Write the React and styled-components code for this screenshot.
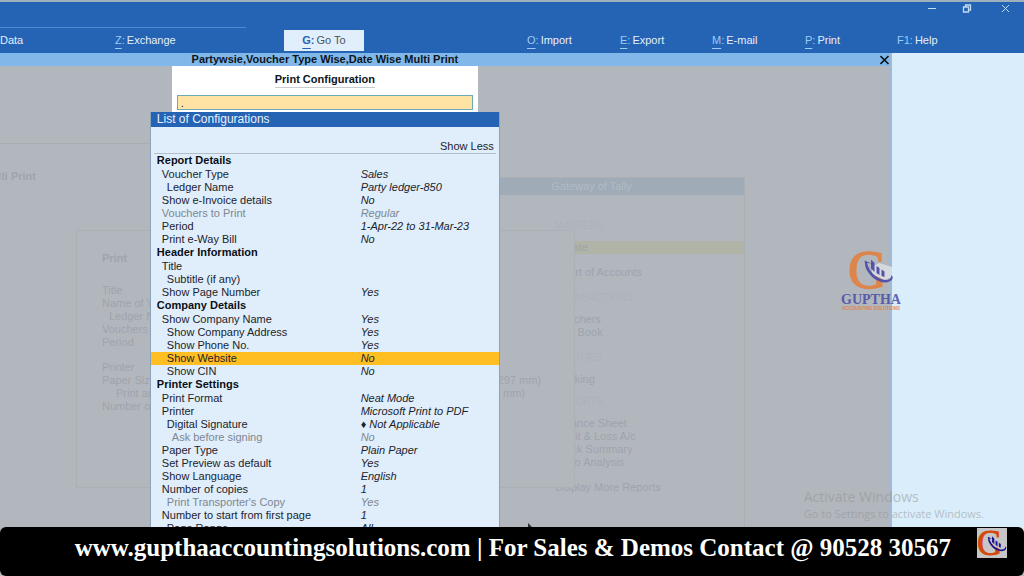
import React, {useState} from 'react';
import styled, {createGlobalStyle} from 'styled-components';

const GlobalStyle = createGlobalStyle`
    * {
        box-sizing: border-box;
    }

    body {
        margin: 0;
        font-family: "Liberation Sans", Arial, sans-serif;
        font-size: 11px;
        line-height: 13px;
        color: #1c232b;
    }

    button, input {
        font: inherit;
        color: inherit;
    }
`

const Screen = styled.div`
    display: flex;
    flex-direction: column;
    height: 100vh;
    overflow: hidden;
    background: #b2b7be;
`

const Header = styled.header`
    background: #2563b4;
    border-top: 2px solid #9fb0bd;
`

const WindowBar = styled.div`
    display: flex;
    justify-content: flex-end;
    gap: 20px;
    height: 25px;
    padding-right: 10px;
`

const WindowButton = styled.button`
    width: 16px;
    height: 13px;
    padding: 0;
    border: none;
    background: none;
    color: #c3dcf5;
`

const HeaderLine = styled.div`
    width: 24%;
    height: 1px;
    background: #4f8bd0;
`

const Menu = styled.nav`
    display: grid;
    grid-template-columns: 115fr 169fr 243fr 93fr 92fr 93fr 92fr 127fr;
    align-items: center;
    height: 25px;
`

const MenuButton = styled.button`
    justify-self: start;
    padding: 0;
    border: none;
    background: none;
    color: #e4effa;
    white-space: nowrap;
`

const GoToButton = styled(MenuButton)`
    width: 80px;
    height: 21px;
    background: #e0effb;
    color: #4b545e;
`

const Key = styled.span`
    color: ${({$strong}) => $strong ? '#2563b4' : '#9ccbf5'};
    font-weight: ${({$strong}) => $strong ? 'bold' : 'normal'};
    text-decoration: ${({$plain}) => $plain ? 'none' : 'underline'};
    text-underline-offset: 4px;
`

const Colon = styled(Key)`
    margin-right: 2px;
    text-decoration: none;
`

const Workspace = styled.div`
    display: flex;
    flex: 1;
    min-height: 0;
`

const Main = styled.main`
    display: flex;
    flex-direction: column;
    flex: 1;
    min-width: 0;
`

const SidePane = styled.aside`
    width: 134px;
    background: #d9edfa;
    border-left: 2px solid #9fb9d6;
`

const TitleBar = styled.div`
    display: flex;
    justify-content: space-between;
    height: 13px;
    background: #80b8e9;
    color: #0d141c;
`

const Title = styled.h1`
    width: 73%;
    margin: 0;
    font-size: 11px;
    text-align: center;
`

const CloseButton = styled.button`
    width: 10px;
    height: 13px;
    padding: 0;
    border: none;
    background: none;
`

/* backdrop and dialogs share one grid cell */
const Stack = styled.div`
    display: grid;
    grid-template: minmax(0, 1fr) / minmax(0, 1fr);
    flex: 1;
    min-height: 0;
    overflow: hidden;
`

const Backdrop = styled.div`
    position: relative;
    grid-area: 1 / 1;
    color: #9fa4ab;
`

const FadedWindow = styled.section`
    position: absolute;
    left: ${({$x}) => $x}px;
    top: ${({$y}) => $y}px;
    width: ${({$w}) => $w}px;
    height: ${({$h}) => $h}px;
    background: #b2b7be;
    border: 1px solid #abb0b5;
    white-space: nowrap;
    overflow: hidden;
`

const FadedReport = styled(FadedWindow)`
    display: flex;
    flex-direction: column;
    justify-content: flex-end;
    align-items: flex-end;
    padding: 0 115px 6px 0;
    border-width: 0;
    font-weight: bold;

    &::before {
        content: "";
        width: 300px;
        height: 1px;
        margin: 0 -115px 26px 0;
        background: #a9aeb3;
    }
`

const FadedTitle = styled.h2`
    margin: 0;
    padding: 2px 0;
    background: #a0abb8;
    color: #b0bac6;
    font-size: 11px;
    font-weight: normal;
    text-align: center;
`

const FadedMenu = styled.ul`
    margin: 0;
    padding: 12px 0 0;
    list-style: none;
`

const FadedItem = styled.li`
    margin-top: ${({$gap}) => $gap || 0}px;
    padding-left: 116px;
    background: ${({$active}) => $active ? '#b0b4a6' : 'none'};
    color: ${({$caption}) => $caption ? '#adb2ba' : 'inherit'};
    font-size: ${({$caption}) => $caption ? 10 : 11}px;
`

const FadedForm = styled.div`
    padding: 21px 33px 0 25px;
`

const FadedHeading = styled.h2`
    margin: 0 0 19px;
    font-size: 11px;
`

const FadedRow = styled.div`
    display: flex;
    justify-content: space-between;
    margin-top: ${({$gap}) => $gap || 0}px;
    padding-left: ${({$level}) => ($level || 0) * 7}px;
    padding-right: ${({$inset}) => $inset || 0}px;
`

const Cursor = styled.svg`
    position: absolute;
    left: 527px;
    top: 457px;
`

const Dialogs = styled.div`
    display: flex;
    flex-direction: column;
    align-items: center;
    grid-area: 1 / 1;
    width: 73%;
    z-index: 1;
`

const SearchPanel = styled.div`
    width: 306px;
    height: 46px;
    padding: 7px 5px 0;
    background: #fff;
    text-align: center;
    flex-shrink: 0;
`

const SearchLabel = styled.label`
    display: inline-block;
    height: 15px;
    border-bottom: 1px solid #c9cdd2;
    color: #0d141c;
    font-weight: bold;
`

const SearchInput = styled.input`
    display: block;
    width: 100%;
    height: 15px;
    margin-top: 7px;
    padding: 0 3px;
    border: 1px solid #6aabb8;
    background: #fee3a4;
    outline: none;
`

const ListPanel = styled.section`
    flex: 1;
    width: 350px;
    min-height: 0;
    overflow: hidden;
    background: #e0eefb;
    border: solid #8aa3bd;
    border-width: 0 1px;
`

const ListTitle = styled.h2`
    margin: 0;
    padding: 0 6px;
    background: #2563b4;
    color: #e8f2fc;
    font-size: 12px;
    font-weight: normal;
    line-height: 15px;
`

const ListTools = styled.div`
    display: flex;
    justify-content: flex-end;
    margin: 0 3px;
    padding: 13px 2px 0 0;
    height: 27px;
    border-bottom: 1px solid #b3bdc9;
`

const ToolButton = styled.button`
    height: 13px;
    padding: 0;
    border: none;
    background: none;
`

const Settings = styled.table`
    width: 100%;
    table-layout: fixed;
    border-collapse: collapse;
    white-space: nowrap;
`

const NameColumn = styled.col`
    width: 60%;
`

const Group = styled.th`
    height: 14px;
    padding: 0 0 0 6px;
    color: #0a0f16;
    line-height: 13px;
    vertical-align: top;
    text-align: left;
`

const Row = styled.tr`
    background: ${({$active}) => $active ? '#ffbe22' : 'none'};
    color: ${({$muted}) => $muted ? '#7d8791' : 'inherit'};
`

const Name = styled.th`
    height: 13px;
    padding: 0 0 0 ${({$level}) => 6 + $level * 5}px;
    font-weight: normal;
    text-align: left;
`

const Value = styled.td`
    padding: 0 1px;
    font-style: italic;
`

const Banner = styled.footer`
    position: relative;
    display: flex;
    justify-content: flex-end;
    gap: 26px;
    height: 49px;
    margin: -6px 0 0;
    padding: 1px 17px 0 0;
    border-radius: 6px;
    background: #000;
    color: #fff;
    z-index: 2;
    flex-shrink: 0;
`

const BannerText = styled.p`
    margin: 0;
    font-family: "Liberation Serif", "Times New Roman", serif;
    font-size: 25px;
    font-weight: bold;
    line-height: 40px;
    white-space: nowrap;
`

const BannerLogo = styled.svg`
    background: #c6c6c6;
`

const Brand = styled.svg`
    position: absolute;
    right: 120px;
    top: 246px;
    opacity: 0.8;
    z-index: 3;
`

const Watermark = styled.div`
    position: absolute;
    right: 40px;
    top: 488px;
    color: rgba(140, 143, 140, 0.5);
    font-family: "Open Sans", sans-serif;
    font-size: 11px;
    line-height: 17px;
    z-index: 3;
`

const WatermarkTitle = styled.div`
    font-size: 14px;
`

const menuItems = [
    {key: 'O', text: 'Import'},
    {key: 'E', text: 'Export'},
    {key: 'M', text: 'E-mail'},
    {key: 'P', text: 'Print'},
    {key: 'F1', text: 'Help', plain: true},
];

const settings = [
    {group: 'Report Details'},
    {name: 'Voucher Type', value: 'Sales', level: 1},
    {name: 'Ledger Name', value: 'Party ledger-850', level: 2},
    {name: 'Show e-Invoice details', value: 'No', level: 1},
    {name: 'Vouchers to Print', value: 'Regular', level: 1, muted: true},
    {name: 'Period', value: '1-Apr-22 to 31-Mar-23', level: 1},
    {name: 'Print e-Way Bill', value: 'No', level: 1},
    {group: 'Header Information'},
    {name: 'Title', value: '', level: 1},
    {name: 'Subtitle (if any)', value: '', level: 2},
    {name: 'Show Page Number', value: 'Yes', level: 1},
    {group: 'Company Details'},
    {name: 'Show Company Name', value: 'Yes', level: 1},
    {name: 'Show Company Address', value: 'Yes', level: 2},
    {name: 'Show Phone No.', value: 'Yes', level: 2},
    {name: 'Show Website', value: 'No', level: 2},
    {name: 'Show CIN', value: 'No', level: 2},
    {group: 'Printer Settings'},
    {name: 'Print Format', value: 'Neat Mode', level: 1},
    {name: 'Printer', value: 'Microsoft Print to PDF', level: 1},
    {name: 'Digital Signature', value: '♦ Not Applicable', level: 2},
    {name: 'Ask before signing', value: 'No', level: 3, muted: true},
    {name: 'Paper Type', value: 'Plain Paper', level: 1},
    {name: 'Set Preview as default', value: 'Yes', level: 1},
    {name: 'Show Language', value: 'English', level: 1},
    {name: 'Number of copies', value: '1', level: 1},
    {name: "Print Transporter's Copy", value: 'Yes', level: 2, muted: true},
    {name: 'Number to start from first page', value: '1', level: 1},
    {name: 'Page Range', value: 'All', level: 2},
];

const gateway = [
    {text: 'MASTERS', caption: true, gap: 12},
    {text: 'Create', gap: 9, active: true},
    {text: 'Chart of Accounts', gap: 12},
    {text: 'TRANSACTIONS', caption: true, gap: 12},
    {text: 'Vouchers', gap: 9},
    {text: 'Day Book'},
    {text: 'UTILITIES', caption: true, gap: 12},
    {text: 'Banking', gap: 9},
    {text: 'REPORTS', caption: true, gap: 9},
    {text: 'Balance Sheet', gap: 9},
    {text: 'Profit & Loss A/c'},
    {text: 'Stock Summary'},
    {text: 'Ratio Analysis'},
    {text: 'Display More Reports', gap: 12},
];

const printForm = [
    {name: 'Title'},
    {name: 'Name of Voucher Type'},
    {name: 'Ledger Name', level: 1},
    {name: 'Vouchers to Print'},
    {name: 'Period'},
    {name: 'Printer', gap: 12},
    {name: 'Paper Size', value: '(210 mm x 297 mm)'},
    {name: 'Print area', value: '(195 mm x 281 mm)', level: 2, inset: 16},
    {name: 'Number of copies'},
];

function Letter({color}) {
    return (
        <text
            x="2"
            y="42"
            fill={color}
            stroke={color}
            strokeWidth="1.4"
            fontFamily="Liberation Serif, serif"
            fontSize="54"
        >G</text>
    );
}

/* falling bars over a curved arrow, on a plate that cuts into the letter */
function Chart({color, plate}) {
    return (
        <g>
            <path d="M26 21 L33 17 L46 21 V31 L38 34 L26 28 Z" fill={plate} />
            <path
                d="M21 17 C23 25 30 33 39 34 C44 34.5 46 31 45 29 C49 31 46 36.5 39 36.5 C29 36 22 28 19.5 21 L18.5 14.5 L25.5 17.5 Z"
                fill={color}
            />
            <path d="M25 13.5 L28.5 17 V26 L25 22.5 Z" fill={color} />
            <path d="M30.5 20 L33.5 22 V29 L30.5 27 Z" fill={color} />
            <path d="M35.5 23.5 L38.5 25.5 V31 L35.5 30 Z" fill={color} />
        </g>
    );
}

function Faded() {
    return (
        <Backdrop aria-hidden="true">
            <FadedReport $x={0} $y={0} $w={151} $h={123}>Multi Print</FadedReport>
            <FadedWindow $x={438} $y={111} $w={307} $h={480}>
                <FadedTitle>Gateway of Tally</FadedTitle>
                <FadedMenu>
                    {gateway.map((item) => (
                        <FadedItem key={item.text} $gap={item.gap} $caption={item.caption} $active={item.active}>
                            {item.text}
                        </FadedItem>
                    ))}
                </FadedMenu>
            </FadedWindow>
            <FadedWindow $x={76} $y={164} $w={499} $h={258}>
                <FadedForm>
                    <FadedHeading>Print</FadedHeading>
                    {printForm.map((row) => (
                        <FadedRow key={row.name} $gap={row.gap} $level={row.level} $inset={row.inset}>
                            <span>{row.name}</span>
                            <span>{row.value}</span>
                        </FadedRow>
                    ))}
                </FadedForm>
            </FadedWindow>
            <Cursor width="9" height="14" viewBox="0 0 9 14">
                <path d="M1 0 V11 L4 9 L6 13 L7 12 L6 8 H9 Z" fill="#2b2f36" />
            </Cursor>
        </Backdrop>
    );
}

export default function App() {
    const [active, setActive] = useState('Show Website');
    const [search, setSearch] = useState('.');

    return (
        <Screen>
            <GlobalStyle />
            <Header>
                <WindowBar>
                    <WindowButton aria-label="Minimize">
                        <svg width="16" height="13" viewBox="0 0 16 13" stroke="currentColor">
                            <path d="M2 6.5 H10" />
                        </svg>
                    </WindowButton>
                    <WindowButton aria-label="Restore">
                        <svg width="16" height="13" viewBox="0 0 16 13" fill="none" stroke="currentColor" strokeWidth="1.3">
                            <path d="M1.5 5 H6.5 V10 H1.5 Z M3.5 5 V3 H8.5 V8 H6.5" />
                        </svg>
                    </WindowButton>
                    <WindowButton aria-label="Close">
                        <svg width="16" height="13" viewBox="0 0 16 13" fill="none" stroke="currentColor">
                            <path d="M4 3 L11 10 M11 3 L4 10" />
                        </svg>
                    </WindowButton>
                </WindowBar>
                <HeaderLine />
                <Menu>
                    <MenuButton>Data</MenuButton>
                    <MenuButton><Key>Z</Key><Colon>:</Colon>Exchange</MenuButton>
                    <GoToButton><Key $strong>G</Key><Colon $strong>:</Colon>Go To</GoToButton>
                    {menuItems.map((item) => (
                        <MenuButton key={item.key}>
                            <Key $plain={item.plain}>{item.key}</Key><Colon>:</Colon>{item.text}
                        </MenuButton>
                    ))}
                </Menu>
            </Header>
            <Workspace>
                <Main>
                    <TitleBar>
                        <Title>Partywsie,Voucher Type Wise,Date Wise Multi Print</Title>
                        <CloseButton aria-label="Close report">
                            <svg width="10" height="12" viewBox="0 0 10 12" stroke="currentColor" strokeWidth="1.6">
                                <path d="M0.5 3 L8.5 11 M8.5 3 L0.5 11" />
                            </svg>
                        </CloseButton>
                    </TitleBar>
                    <Stack>
                        <Faded />
                        <Dialogs>
                            <SearchPanel>
                                <SearchLabel htmlFor="search">Print Configuration</SearchLabel>
                                <SearchInput id="search" value={search} onChange={(e) => setSearch(e.target.value)} />
                            </SearchPanel>
                            <ListPanel>
                                <ListTitle>List of Configurations</ListTitle>
                                <ListTools>
                                    <ToolButton>Show Less</ToolButton>
                                </ListTools>
                                <Settings>
                                    <colgroup>
                                        <NameColumn />
                                        <col />
                                    </colgroup>
                                    <tbody>
                                        {settings.map((item) => item.group ? (
                                            <tr key={item.group}>
                                                <Group colSpan={2}>{item.group}</Group>
                                            </tr>
                                        ) : (
                                            <Row
                                                key={item.name}
                                                $active={item.name === active}
                                                $muted={item.muted}
                                                onClick={() => setActive(item.name)}
                                            >
                                                <Name scope="row" $level={item.level}>{item.name}</Name>
                                                <Value>{item.value}</Value>
                                            </Row>
                                        ))}
                                    </tbody>
                                </Settings>
                            </ListPanel>
                        </Dialogs>
                    </Stack>
                </Main>
                <SidePane />
            </Workspace>
            <Brand width="64" height="68" viewBox="-6 0 64 68">
                <Letter color="#e8792f" />
                <Chart color="#3d3aa5" plate="#dfe3e8" />
                <text x="25" y="58" textAnchor="middle" fill="#4443a3" fontFamily="Liberation Serif, serif" fontWeight="bold" fontSize="14">GUPTHA</text>
                <text x="25" y="64" textAnchor="middle" fill="#e8792f" fontFamily="Liberation Sans, sans-serif" fontWeight="bold" fontSize="4.5">ACCOUNTING SOLUTIONS</text>
            </Brand>
            <Watermark>
                <WatermarkTitle>Activate Windows</WatermarkTitle>
                Go to Settings to activate Windows.
            </Watermark>
            <Banner>
                <BannerText>www.gupthaaccountingsolutions.com | For Sales &amp; Demos Contact @ 90528 30567</BannerText>
                <BannerLogo width="30" height="30" viewBox="2 1 46 46">
                    <Letter color="#d4470c" />
                    <Chart color="#1c1490" plate="#c6c6c6" />
                </BannerLogo>
            </Banner>
        </Screen>
    );
}
